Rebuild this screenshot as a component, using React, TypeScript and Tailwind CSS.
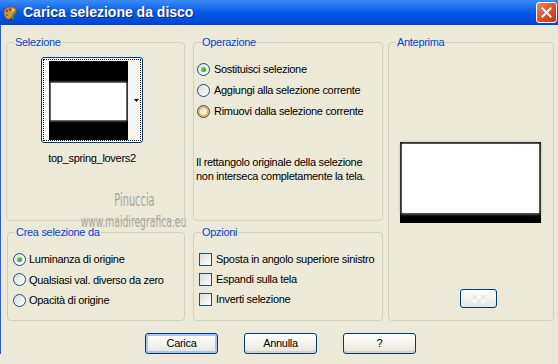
import React from 'react';

const Radio = ({ checked, hover }: { checked?: boolean; hover?: boolean }) => (
  <span
    className={`flex h-[13px] w-[13px] shrink-0 items-center justify-center rounded-full border border-[#1c5180] bg-linear-to-br from-[#dcdcd7] to-white ${
      hover ? 'shadow-[inset_0_0_0_2px_#f8b33a]' : ''
    }`}
  >
    {checked && <span className="h-[5px] w-[5px] rounded-full bg-linear-to-br from-[#6fe06b] to-[#1d9a1d]" />}
  </span>
);

const Check = () => (
  <span className="h-[13px] w-[13px] shrink-0 border border-[#1c5180] bg-linear-to-br from-[#dcdcd7] to-white" />
);

const Group = ({
  title,
  className,
  children,
}: {
  title: string;
  className?: string;
  children?: React.ReactNode;
}) => (
  <fieldset className={`rounded-[4px] border border-[#d0d0bf] ${className ?? ''}`}>
    <legend className="ml-[7px] px-[1px] leading-[14px] text-[#0046d5]">{title}</legend>
    {children}
  </fieldset>
);

const XpButton = ({ label, primary }: { label: string; primary?: boolean }) => (
  <button
    className={`h-[21px] w-[73px] rounded-[3px] border border-[#003c74] bg-linear-to-b from-white via-[#f4f3ee] to-[#e3e2da] text-black ${
      primary ? 'shadow-[inset_0_0_0_2px_#a9c3ee]' : 'shadow-[inset_0_-2px_0_#d6d0c5]'
    }`}
  >
    {label}
  </button>
);

const PaletteIcon = () => (
  <svg width="16" height="16" viewBox="0 0 16 16">
    <path d="M2 8c0-4 3-6 7-6s6 2 5 5-3 1-3 3 2 3 0 4-9 1-9-6z" fill="#d9913f" stroke="#8a4a14" strokeWidth="0.8" />
    <circle cx="5" cy="6" r="1.2" fill="#e02020" />
    <circle cx="8" cy="4.5" r="1.2" fill="#2050e0" />
    <circle cx="11" cy="5" r="1.1" fill="#f4e040" />
    <circle cx="5" cy="10" r="1.2" fill="#30a030" />
    <path d="M9 14l5-8" stroke="#5a8a30" strokeWidth="1.6" />
    <path d="M8.3 15l1.2-1.8" stroke="#333" strokeWidth="1.6" />
  </svg>
);

export default function App() {
  return (
    <div className="h-[364px] w-[558px] overflow-hidden bg-[#ece9d8] font-['Liberation_Sans',Arial,sans-serif] text-[11px] tracking-[-0.3px] text-black">
      {/* title bar */}
      <div className="flex h-[25px] items-center bg-linear-to-b from-[#3b8cf5] via-[#0058e6] to-[#0046d0] pl-[2px] pr-[1px]">
        <PaletteIcon />
        <span className="ml-[5px] text-[14px] font-bold tracking-normal text-white [text-shadow:1px_1px_0_#0a2a8a]">
          Carica selezione da disco
        </span>
        <div className="ml-auto flex h-[21px] w-[21px] items-center justify-center rounded-[3px] border border-white bg-linear-to-br from-[#ea8a6a] via-[#d9502c] to-[#c23a16]">
          <svg width="11" height="11" viewBox="0 0 11 11">
            <path d="M1.5 1.5l8 8M9.5 1.5l-8 8" stroke="white" strokeWidth="2" strokeLinecap="square" />
          </svg>
        </div>
      </div>

      {/* body */}
      <div className="relative border-l border-[#2a5fd8]">
        <div className="flex pl-[5px] pt-[10px]">
          <div className="grid grid-cols-[179px_190px] gap-x-[8px] gap-y-[4px]">
            <Group title="Selezione" className="h-[186px]">
              <div className="ml-[34px] mt-[8px] flex w-[102px] flex-col items-center">
                <div className="h-[86px] w-[102px] rounded-[3px] border border-[#003c74] bg-white p-[1px]">
                  <div className="flex h-full items-center border border-dotted border-black pl-[5px]">
                    <div className="flex h-[79px] w-[79px] items-start justify-center bg-black pt-[22px]">
                      <div className="h-[37px] w-[75px] bg-white shadow-[0_0_2px_1px_#999]" />
                    </div>
                    <div className="flex h-full flex-1 items-center justify-end bg-[#f7f7f3] pr-[1px]">
                      <svg width="5" height="3" viewBox="0 0 5 3">
                        <path d="M0 0h5L2.5 3z" fill="black" />
                      </svg>
                    </div>
                  </div>
                </div>
                <div className="mt-[8px] leading-[14px]">top_spring_lovers2</div>
              </div>
            </Group>

            <Group title="Operazione" className="h-[186px]">
              <div className="mt-[10px] flex flex-col pl-[3px]">
                <label className="flex h-[21px] items-center gap-[4px] whitespace-nowrap">
                  <Radio checked />
                  Sostituisci selezione
                </label>
                <label className="flex h-[21px] items-center gap-[4px] whitespace-nowrap">
                  <Radio />
                  Aggiungi alla selezione corrente
                </label>
                <label className="flex h-[21px] items-center gap-[4px] whitespace-nowrap">
                  <Radio hover />
                  Rimuovi dalla selezione corrente
                </label>
              </div>
              <p className="mt-[33px] pl-[2px] leading-[14px]">
                Il rettangolo originale della selezione
                <br />
                non interseca completamente la tela.
              </p>
            </Group>

            <Group title="Crea selezione da" className="ml-[1px] h-[96px]">
              <div className="mt-[10px] flex flex-col pl-[5px]">
                <label className="flex h-[20.5px] items-center gap-[3px] whitespace-nowrap">
                  <Radio checked />
                  Luminanza di origine
                </label>
                <label className="flex h-[20.5px] items-center gap-[3px] whitespace-nowrap">
                  <Radio />
                  Qualsiasi val. diverso da zero
                </label>
                <label className="flex h-[20.5px] items-center gap-[3px] whitespace-nowrap">
                  <Radio />
                  Opacità di origine
                </label>
              </div>
            </Group>

            <Group title="Opzioni" className="h-[96px]">
              <div className="mt-[10px] flex flex-col pl-[5px]">
                <label className="flex h-[20px] items-center gap-[4px] whitespace-nowrap">
                  <Check />
                  Sposta in angolo superiore sinistro
                </label>
                <label className="flex h-[20px] items-center gap-[4px] whitespace-nowrap">
                  <Check />
                  Espandi sulla tela
                </label>
                <label className="flex h-[20px] items-center gap-[4px] whitespace-nowrap">
                  <Check />
                  Inverti selezione
                </label>
              </div>
            </Group>
          </div>

          <Group title="Anteprima" className="ml-[5px] h-[286px] w-[166px]">
            <div className="ml-[11px] mt-[93px] flex h-[81px] w-[141px] items-start justify-center bg-black pt-[2px]">
              <div className="h-[69px] w-[137px] bg-white shadow-[0_0_3px_1px_#888]" />
            </div>
            <div className="ml-[71px] mt-[66px] flex h-[19px] w-[37px] items-center justify-center rounded-[3px] border border-[#003c74] bg-linear-to-b from-white to-[#e6e5de]">
              <div className="grid grid-cols-3 gap-0 opacity-60">
                {[0, 1, 2, 3, 4, 5].map((i) => (
                  <span key={i} className={`h-[4px] w-[4px] ${i % 2 === 0 ? 'bg-[#e4e4e4]' : 'bg-white'}`} />
                ))}
              </div>
            </div>
          </Group>
        </div>

        {/* buttons */}
        <div className="mt-[12px] flex gap-[26px] pl-[144px]">
          <XpButton label="Carica" primary />
          <XpButton label="Annulla" />
          <XpButton label="?" />
        </div>

        {/* watermark */}
        <div className="pointer-events-none absolute left-[80px] top-[166px] flex w-[106px] flex-col items-center font-['DejaVu_Sans_Condensed','DejaVu_Sans',sans-serif] leading-[18px] tracking-normal text-[#a8a69c]">
          <span className="scale-x-[0.64] text-[17px]">Pinuccia</span>
          <span className="mt-[4px] scale-x-[0.64] whitespace-nowrap text-[16px]">www.maidiregrafica.eu</span>
        </div>
      </div>
    </div>
  );
}
